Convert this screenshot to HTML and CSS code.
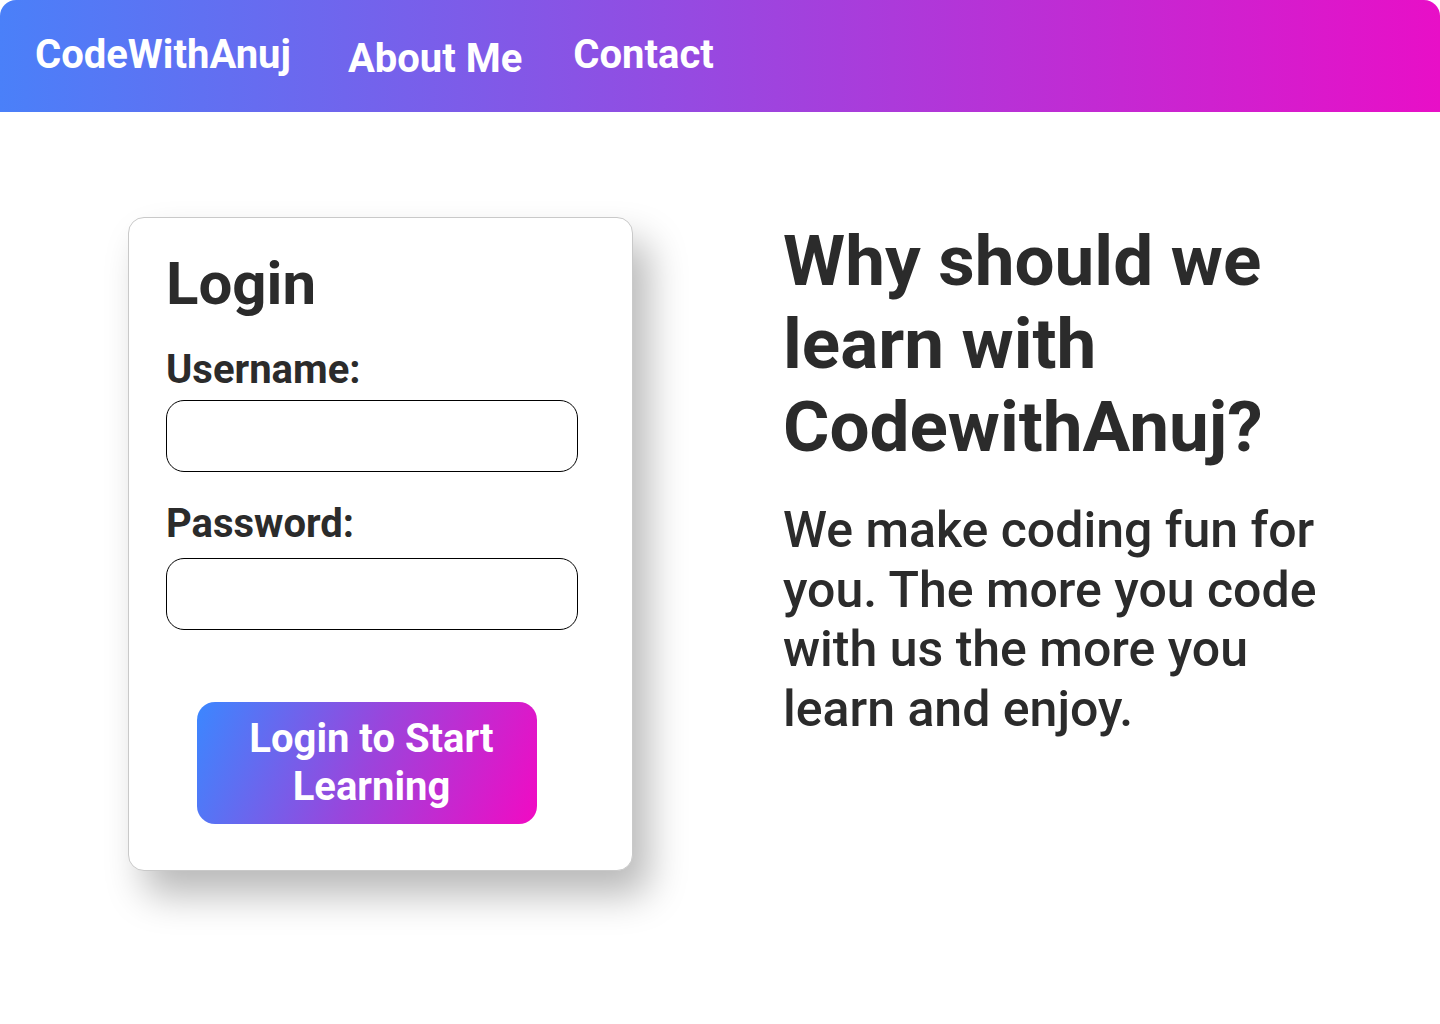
FILE: index.html
```html
<!DOCTYPE html>
<html lang="en">
<head>
<meta charset="utf-8">
<title>CodeWithAnuj - Login</title>
<link rel="stylesheet" href="styles.css">
</head>
<body>
<nav class="navbar">
  <a class="brand" href="#">CodeWithAnuj</a>
  <a class="nav-link about" href="#">About Me</a>
  <a class="nav-link contact" href="#">Contact</a>
</nav>
<main class="main">
  <section class="card">
    <h1 class="card-title">Login</h1>
    <label class="field-label user" for="username">Username:</label>
    <input class="field-input user-input" id="username" type="text">
    <label class="field-label pw" for="password">Password:</label>
    <input class="field-input pw-input" id="password" type="password">
    <div class="btn-row">
      <button class="login-btn" type="button">Login to Start Learning</button>
    </div>
  </section>
  <section class="info">
    <h2 class="info-title">Why should we learn with CodewithAnuj?</h2>
    <p class="info-text">We make coding fun for you. The more you code with us the more you learn and enjoy.</p>
  </section>
</main>
</body>
</html>
```
FILE: styles.css
```css
* { box-sizing: border-box; }
html, body { margin: 0; padding: 0; background: #fff; min-height: 100%; }
body { font-family: Roboto, "Noto Sans", sans-serif; color: #2b2b2b; min-height: 1024px; }

.navbar {
  height: 112px;
  display: flex;
  align-items: center;
  padding-left: 35px;
  background: linear-gradient(to right, #4a80f9, #e80fc7);
  border-radius: 16px 16px 0 0;
}
.navbar a {
  color: #fff;
  text-decoration: none;
  font-weight: 700;
  font-size: 40px;
  line-height: 47px;
}
.brand { margin-right: 57px; padding-bottom: 3px; }
.about { margin-right: 51px; padding-top: 4px; }
.contact { padding-bottom: 3px; }

.main {
  display: flex;
  align-items: flex-start;
  padding: 105px 0 120px 128px;
}

.card {
  flex: none;
  width: 505px;
  height: 654px;
  border: 1px solid #c9c9c9;
  border-radius: 16px;
  background: #fff;
  box-shadow: 16px 24px 38px rgba(0, 0, 0, 0.28);
  padding: 34px 0 0 37px;
  display: flex;
  flex-direction: column;
}
.card-title {
  margin: 0;
  font-size: 60px;
  font-weight: 700;
  line-height: 64px;
}
.field-label {
  font-size: 40px;
  font-weight: 700;
  line-height: 46px;
}
.field-label.user { margin-top: 31px; }
.field-label.pw { margin-top: 29px; }
.field-input {
  width: 412px;
  height: 72px;
  border: 1px solid #000;
  border-radius: 18px;
  background: #fff;
  font-size: 24px;
  padding: 0 16px;
  outline: none;
}
.user-input { margin-top: 7px; }
.pw-input { margin-top: 11px; }
.btn-row {
  width: 412px;
  display: flex;
  justify-content: center;
  margin-top: 72px;
  margin-left: -5px;
}
.login-btn {
  width: 340px;
  height: 122px;
  border: none;
  border-radius: 18px;
  background: linear-gradient(112deg, #3b87ff 0%, #9a45dc 50%, #f20ac3 100%);
  color: #fff;
  font-family: Roboto, "Noto Sans", sans-serif;
  font-weight: 700;
  font-size: 40px;
  line-height: 48px;
  padding: 0 38px 0 47px;
}

.info { margin-left: 150px; padding-top: 2px; width: 560px; }
.info-title {
  margin: 0;
  font-size: 71px;
  line-height: 83px;
  font-weight: 700;
}
.info-text {
  margin: 33px 0 0;
  font-size: 50px;
  line-height: 59.5px;
  font-weight: 500;
}
```
